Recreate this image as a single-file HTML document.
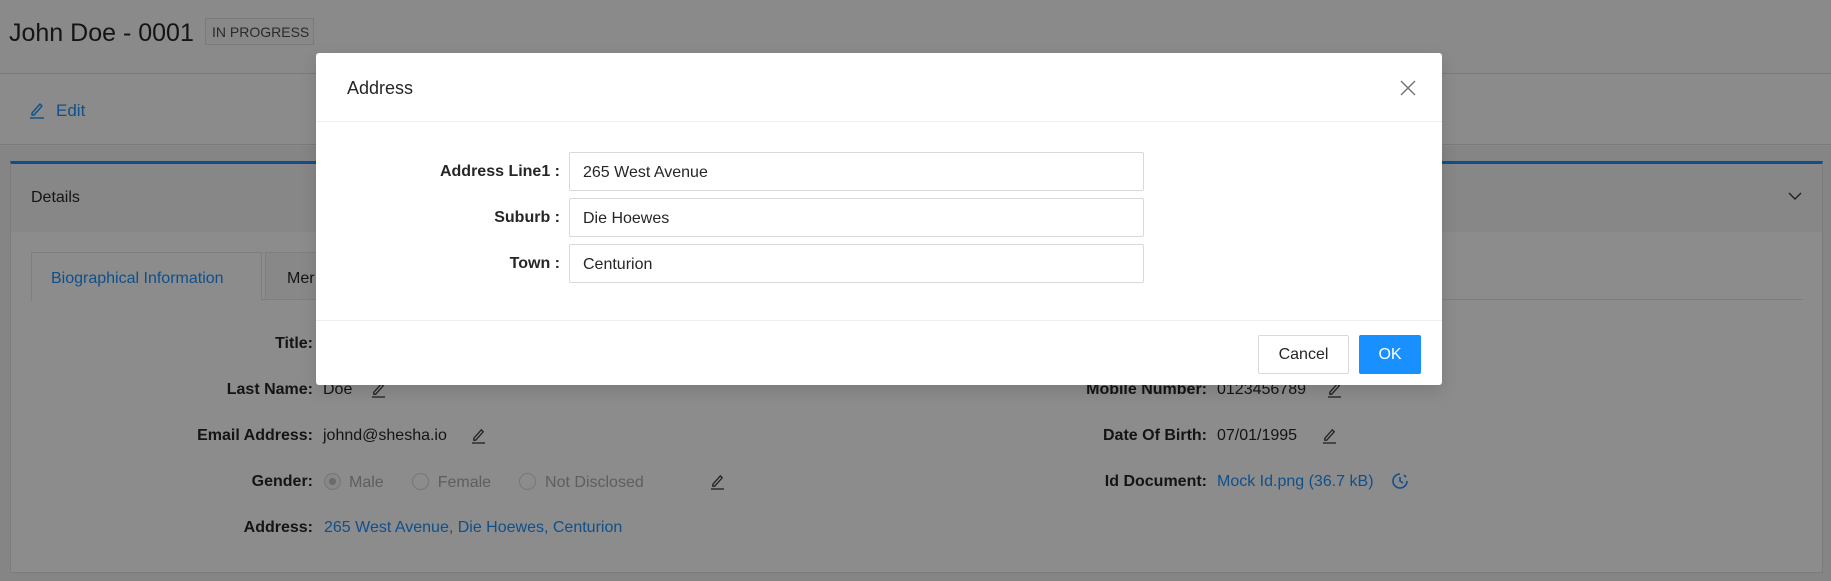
<!DOCTYPE html>
<html><head><meta charset="utf-8"><style>
*{margin:0;padding:0;box-sizing:border-box}
body{width:1831px;height:581px;overflow:hidden;background:#8a8a8a;font-family:"Liberation Sans",sans-serif;color:#141414;position:relative}
.a{position:absolute;white-space:nowrap}
.lbl{font-weight:bold;font-size:16px;text-align:right}
.val{font-size:16px}
.blue{color:#0f4f8c}
.in{position:absolute;left:569px;width:575px;height:39px;border:1px solid #d9d9d9;border-radius:2px;font-size:16px;padding:11px 13px;color:#262626}
.ml{position:absolute;right:1271px;font-weight:bold;font-size:16px;color:#262626}
.r{display:inline-block;width:17px;height:17px;border:1px solid #777;border-radius:50%;vertical-align:-3px}
</style></head><body>
<div class="a" style="left:0;top:0;width:1831px;height:74px;background:#8a8a8a;border-bottom:1px solid #7a7a7a"></div>
<div class="a" style="left:9px;top:19px;font-size:25px">John Doe - 0001</div>
<div class="a" style="left:205px;top:18px;width:109px;height:27px;border:1px solid #7a7a7a;background:#888;font-size:14px;color:#2a2a2a;padding:5px 6px">IN PROGRESS</div>
<div class="a" style="left:0;top:74px;width:1831px;height:71px;background:#8b8b8b;border-bottom:1px solid #7a7a7a"></div>
<svg class="a" style="left:29px;top:101px" width="16" height="18" viewBox="0 0 16 18"><path d="M3 12 L11 3 L13 5 L5 14 L3 14 Z" fill="none" stroke="#0f4f8c" stroke-width="1.4"/><line x1="1" y1="17" x2="15" y2="17" stroke="#0f4f8c" stroke-width="1.4"/></svg>
<div class="a blue" style="left:56px;top:101px;font-size:17px">Edit</div>
<div class="a" style="left:0;top:146px;width:1831px;height:435px;background:#858585"></div>
<div class="a" style="left:10px;top:161px;width:1813px;height:412px;background:#8c8c8c;border:1px solid #7c7c7c;border-top:3px solid #0f4f8c"></div>
<div class="a" style="left:11px;top:164px;width:1811px;height:68px;background:#878787"></div>
<div class="a" style="left:31px;top:189px;font-size:16px">Details</div>
<svg class="a" style="left:1788px;top:191px" width="14" height="10" viewBox="0 0 14 10"><path d="M1 2 L7 8 L13 2" fill="none" stroke="#222" stroke-width="1.4"/></svg>
<div class="a" style="left:31px;top:299px;width:1772px;height:1px;background:#7c7c7c"></div>
<div class="a" style="left:31px;top:252px;width:231px;height:49px;border:1px solid #7e7e7e;border-bottom:none;background:#8c8c8c"></div>
<div class="a blue" style="left:51px;top:270px;font-size:16px">Biographical Information</div>
<div class="a" style="left:265px;top:252px;width:120px;height:48px;border:1px solid #7e7e7e;background:#888"></div>
<div class="a" style="left:287px;top:270px;font-size:16px">Mer</div>

<div class="a lbl" style="right:1518px;top:335px">Title:</div>
<div class="a lbl" style="right:1518px;top:381px">Last Name:</div>
<div class="a val" style="left:323px;top:381px">Doe</div>
<div class="a lbl" style="right:1518px;top:427px">Email Address:</div>
<div class="a val" style="left:323px;top:427px">johnd@shesha.io</div>
<div class="a lbl" style="right:1518px;top:473px">Gender:</div>
<div class="a val" style="left:324px;top:473px;color:#5e5e5e">
<span class="r" style="margin-right:8px;background:#888;box-shadow:inset 0 0 0 4px #888,inset 0 0 0 9px #6b6b6b"></span>Male<span class="r" style="margin:0 9px 0 28px"></span>Female<span class="r" style="margin:0 9px 0 28px"></span>Not Disclosed</div>
<div class="a lbl" style="right:1518px;top:519px">Address:</div>
<div class="a val blue" style="left:324px;top:519px">265 West Avenue, Die Hoewes, Centurion</div>

<div class="a lbl" style="right:624px;top:381px">Mobile Number:</div>
<div class="a val" style="left:1217px;top:381px">0123456789</div>
<div class="a lbl" style="right:624px;top:427px">Date Of Birth:</div>
<div class="a val" style="left:1217px;top:427px">07/01/1995</div>
<div class="a lbl" style="right:624px;top:473px">Id Document:</div>
<div class="a val blue" style="left:1217px;top:473px">Mock Id.png (36.7 kB)</div>
<svg class="a" style="left:1391px;top:472px" width="18" height="18" viewBox="0 0 18 18"><path d="M9 2 A7 7 0 1 0 16 9" fill="none" stroke="#0f4f8c" stroke-width="1.6"/><path d="M9 5 V9 L12 11" fill="none" stroke="#0f4f8c" stroke-width="1.6"/><path d="M13 3 L15 5" stroke="#0f4f8c" stroke-width="1.6"/></svg>
<svg class="a" style="left:371px;top:381px" width="15" height="17" viewBox="0 0 16 18"><path d="M3 12 L11 3 L13 5 L5 14 L3 14 Z" fill="none" stroke="#222" stroke-width="1.4"/><line x1="1" y1="17" x2="15" y2="17" stroke="#222" stroke-width="1.4"/></svg>
<svg class="a" style="left:471px;top:427px" width="15" height="17" viewBox="0 0 16 18"><path d="M3 12 L11 3 L13 5 L5 14 L3 14 Z" fill="none" stroke="#222" stroke-width="1.4"/><line x1="1" y1="17" x2="15" y2="17" stroke="#222" stroke-width="1.4"/></svg>
<svg class="a" style="left:710px;top:473px" width="15" height="17" viewBox="0 0 16 18"><path d="M3 12 L11 3 L13 5 L5 14 L3 14 Z" fill="none" stroke="#222" stroke-width="1.4"/><line x1="1" y1="17" x2="15" y2="17" stroke="#222" stroke-width="1.4"/></svg>
<svg class="a" style="left:1327px;top:381px" width="15" height="17" viewBox="0 0 16 18"><path d="M3 12 L11 3 L13 5 L5 14 L3 14 Z" fill="none" stroke="#222" stroke-width="1.4"/><line x1="1" y1="17" x2="15" y2="17" stroke="#222" stroke-width="1.4"/></svg>
<svg class="a" style="left:1322px;top:427px" width="15" height="17" viewBox="0 0 16 18"><path d="M3 12 L11 3 L13 5 L5 14 L3 14 Z" fill="none" stroke="#222" stroke-width="1.4"/><line x1="1" y1="17" x2="15" y2="17" stroke="#222" stroke-width="1.4"/></svg>

<div class="a" style="left:316px;top:53px;width:1126px;height:332px;background:#fff;border-radius:3px;box-shadow:0 6px 16px rgba(0,0,0,.12)"></div>
<div class="a" style="left:347px;top:78px;font-size:18px;color:#262626">Address</div>
<svg class="a" style="left:1400px;top:80px" width="16" height="16" viewBox="0 0 16 16"><path d="M1 1 L15 15 M15 1 L1 15" stroke="#777" stroke-width="1.5"/></svg>
<div class="a" style="left:316px;top:121px;width:1126px;height:1px;background:#eee"></div>
<div class="ml" style="top:163px">Address Line1 :</div>
<div class="ml" style="top:209px">Suburb :</div>
<div class="ml" style="top:255px">Town :</div>
<div class="in" style="top:152px">265 West Avenue</div>
<div class="in" style="top:198px">Die Hoewes</div>
<div class="in" style="top:244px">Centurion</div>
<div class="a" style="left:316px;top:320px;width:1126px;height:1px;background:#eee"></div>
<div class="a" style="left:1258px;top:335px;width:91px;height:39px;border:1px solid #d9d9d9;border-radius:2px;font-size:16px;color:#262626;text-align:center;line-height:38px">Cancel</div>
<div class="a" style="left:1359px;top:335px;width:62px;height:39px;background:#1890ff;border-radius:2px;font-size:16px;color:#fff;text-align:center;line-height:40px">OK</div>
</body></html>
